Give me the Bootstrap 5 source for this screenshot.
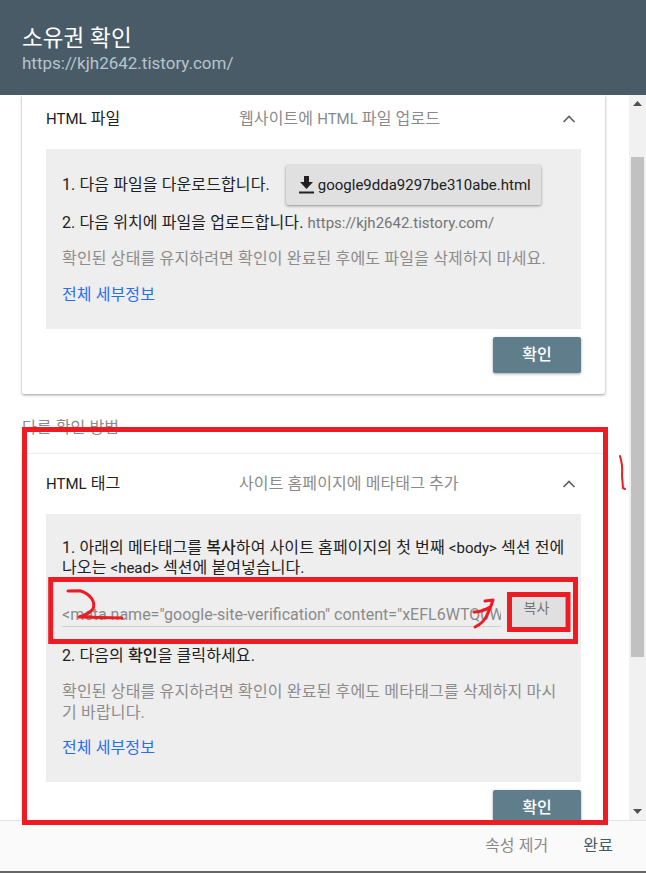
<!DOCTYPE html>
<html lang="ko">
<head>
<meta charset="utf-8">
<title>소유권 확인</title>
<link href="https://cdn.jsdelivr.net/npm/bootstrap@5.3.0/dist/css/bootstrap.min.css" rel="stylesheet">
<style>
html,body{height:100%;overflow:hidden;}
body{font-family:Roboto,"Noto Sans CJK KR",sans-serif;font-size:16px;line-height:20px;letter-spacing:.1px;color:#212121;background:#fff;position:relative;}
.lat{font-size:15px;letter-spacing:0;}
.shell{height:873px;}
.top-bar{height:95px;background:#485b67;color:#fff;padding:25px 22px 0;flex:none;}
.top-title{font-size:22.500px;line-height:26px;}
.top-url{font-size:17px;line-height:24px;letter-spacing:0;color:#b8c4cc;}
.middle{height:725px;flex:none;}
.scroll-pane{flex:1;overflow:hidden;padding:0 24px 0 22px;}
.v-card{border:0;border-radius:0 0 2px 2px;box-shadow:0 1px 3px rgba(0,0,0,.4);height:299px;}
.v-card2{border:0;border-radius:0;box-shadow:0 0 2px rgba(0,0,0,.2);height:500px;}
.card-head{height:54px;padding:0 29px 6px 24px;}
.card-head2{height:60px;padding:0 29px 0 24px;}
.head-name{width:193px;}
.head-sub{color:#8a8a8a;}
.gray-box{background:#eeeeee;margin:0 24px;padding:16px;}
.box1{height:180px;}
.box2{height:268px;padding-top:24px;}
.dl-btn{height:40px;width:255px;background:#e0e0e0;border:0;border-radius:2px;box-shadow:0 1px 3px rgba(0,0,0,.4);margin-left:16px;padding:0 0 0 13px;font-size:15px;letter-spacing:0;color:#212121;gap:4px;}
.muted-url{color:#757575;}
.muted-note{color:#8c8c8c;letter-spacing:.16px;}
.detail-link{color:#2a6df4;text-decoration:none;}
.ok-row{margin:8px 24px 0 0;}
.ok-btn{width:88px;height:36px;background:#607d8b;color:#fff;border:0;border-radius:2px;box-shadow:0 1px 3px rgba(0,0,0,.35);font-weight:500;font-size:16px;padding:0;}
.other-label{color:#8a8a8a;line-height:20px;margin:24px 0 16px;}
.line-2{margin-top:8px;}
.line-note{margin-top:16px;}
.line-note2{margin-top:15px;line-height:21px;}
.line-link{margin-top:16px;}
.line-link2{margin-top:15px;}
.tag-row{margin:15px 0 19px;height:34px;}
.tag-input{width:439px;height:30px;border-bottom:1px solid #cfcfcf;color:#8a8a8a;font-size:16px;letter-spacing:0;line-height:36px;white-space:nowrap;overflow:hidden;}
.copy-btn{width:53px;height:30px;margin-left:11px;background:#e0e0e0;border:0;border-radius:2px;color:#777;font-size:14px;line-height:22px;padding:0 4px 8px 0;}
.strong-word{font-weight:500;}
.rail{width:17px;flex:none;background:#f1f1f1;}
.rail-up,.rail-down{height:17px;flex:none;}
.rail-track{flex:1;padding:45px 2px 146px;}
.rail-thumb{height:100%;background:#c1c1c1;}
.foot-bar{height:53px;flex:none;background:#fafafa;border-top:1px solid #e3e3e3;border-bottom:2px solid #666;padding:0 33px 0 0;gap:35px;}
.foot-muted{color:#8a8a8a;}
.foot-done{color:#455a64;}
.marks{position:absolute;left:0;top:0;width:646px;height:873px;pointer-events:none;}
</style>
</head>
<body>
<div class="shell d-flex flex-column">
  <header class="top-bar">
    <div class="top-title">소유권 확인</div>
    <div class="top-url">https://kjh2642.tistory.com/</div>
  </header>
  <div class="middle d-flex">
    <main class="scroll-pane">
      <section class="card v-card">
        <div class="card-head d-flex align-items-center">
          <div class="head-name"><span class="lat">HTML</span> 파일</div>
          <div class="head-sub flex-grow-1">웹사이트에 <span class="lat">HTML</span> 파일 업로드</div>
          <svg width="14" height="10" viewBox="0 0 14 10"><path d="M1.500 8 7 2.500 12.500 8" fill="none" stroke="#616161" stroke-width="1.700"/></svg>
        </div>
        <div class="gray-box box1">
          <div class="d-flex align-items-center">
            <span>1. 다음 파일을 다운로드합니다.</span>
            <button class="dl-btn d-flex align-items-center" type="button">
              <svg width="15" height="18" viewBox="0 0 15 18"><path d="M5 0h5v6h4l-6.500 7L1 6h4zM0 15.500h15V17.500H0z" fill="#212121"/></svg>
              <span>google9dda9297be310abe.html</span>
            </button>
          </div>
          <div class="line-2">2. 다음 위치에 파일을 업로드합니다. <span class="muted-url lat">https://kjh2642.tistory.com/</span></div>
          <div class="muted-note line-note">확인된 상태를 유지하려면 확인이 완료된 후에도 파일을 삭제하지 마세요.</div>
          <div class="line-link"><a class="detail-link" href="#">전체 세부정보</a></div>
        </div>
        <div class="ok-row d-flex justify-content-end"><button class="ok-btn" type="button">확인</button></div>
      </section>
      <div class="other-label">다른 확인 방법</div>
      <section class="card v-card2">
        <div class="card-head2 d-flex align-items-center">
          <div class="head-name"><span class="lat">HTML</span> 태그</div>
          <div class="head-sub flex-grow-1">사이트 홈페이지에 메타태그 추가</div>
          <svg width="14" height="10" viewBox="0 0 14 10"><path d="M1.500 8 7 2.500 12.500 8" fill="none" stroke="#616161" stroke-width="1.700"/></svg>
        </div>
        <div class="gray-box box2">
          <div>1. 아래의 메타태그를 <span class="strong-word">복사</span>하여 사이트 홈페이지의 첫 번째 <span class="lat">&lt;body&gt;</span> 섹션 전에 나오는 <span class="lat">&lt;head&gt;</span> 섹션에 붙여넣습니다.</div>
          <div class="tag-row d-flex align-items-end">
            <div class="tag-input">&lt;meta name="google-site-verification" content="xEFL6WTQ0W</div>
            <button class="copy-btn" type="button">복사</button>
          </div>
          <div>2. 다음의 <span class="strong-word">확인</span>을 클릭하세요.</div>
          <div class="muted-note line-note2">확인된 상태를 유지하려면 확인이 완료된 후에도 메타태그를 삭제하지 마시기 바랍니다.</div>
          <div class="line-link2"><a class="detail-link" href="#">전체 세부정보</a></div>
        </div>
        <div class="ok-row d-flex justify-content-end"><button class="ok-btn" type="button">확인</button></div>
      </section>
    </main>
    <aside class="rail d-flex flex-column">
      <div class="rail-up d-flex align-items-center justify-content-center"><svg width="9" height="5" viewBox="0 0 9 5"><path d="M4.500 0 9 5H0z" fill="#505050"/></svg></div>
      <div class="rail-track"><div class="rail-thumb"></div></div>
      <div class="rail-down d-flex align-items-center justify-content-center"><svg width="9" height="5" viewBox="0 0 9 5"><path d="M0 0h9L4.500 5z" fill="#505050"/></svg></div>
    </aside>
  </div>
  <footer class="foot-bar d-flex align-items-center justify-content-end">
    <span class="foot-muted">속성 제거</span>
    <span class="foot-done">완료</span>
  </footer>
</div>
<svg class="marks" viewBox="0 0 646 873" fill="none" stroke="#ed1c24">
  <rect x="24.500" y="429.500" width="581" height="393" stroke-width="5"/>
  <rect x="50.700" y="579.500" width="524.800" height="62" stroke-width="5"/>
  <rect x="509.500" y="594.500" width="58.500" height="35" stroke-width="5"/>
  <path d="M620 456Q623 466 622 475L623 488 625 489" stroke-width="2" stroke-linecap="round"/>
  <path d="M68 591 80 590.700Q88 593 92 599 95 604 93 609 89 614 79 617L122 618" stroke-width="3" stroke-linecap="round" stroke-linejoin="round"/>
  <path d="M485 601 493 600Q491 607 488 613 484 623 475 627M474 612Q482 612 490 607" stroke-width="3" stroke-linecap="round" stroke-linejoin="round"/>
</svg>
<script src="https://cdn.jsdelivr.net/npm/bootstrap@5.3.0/dist/js/bootstrap.bundle.min.js"></script>
</body>
</html>
